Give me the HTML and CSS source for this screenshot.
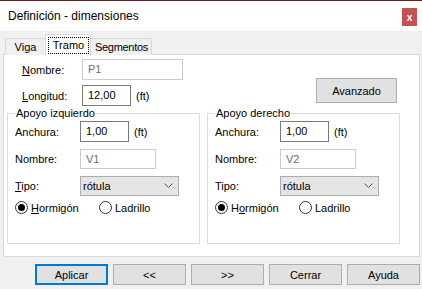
FILE: index.html
```html
<!DOCTYPE html>
<html lang="es">
<head>
    <meta charset="UTF-8">
    <title>Definición - dimensiones</title>
    <link rel="stylesheet" href="styles.css">
</head>
<body>
    <div class="window">
        <div class="titlebar">
            <span class="title">Definición - dimensiones</span>
            <span class="close">x</span>
        </div>

        <div class="client">
            <!-- tab strip -->
            <div class="tabs">
                <span class="tab">Viga</span>
                <span class="tab active"><span class="focus">Tramo</span></span>
                <span class="tab wide">Segmentos</span>
            </div>

            <div class="panel">
                <div class="top">
                    <div class="fields">
                        <div class="row">
                            <label class="lbl"><u>N</u>ombre:</label>
                            <span class="input disabled name-main">P1</span>
                        </div>
                        <div class="row">
                            <label class="lbl"><u>L</u>ongitud:</label>
                            <span class="input num">12,00</span>
                            <span class="unit">(ft)</span>
                        </div>
                    </div>
                    <button class="btn advanced">Avanzado</button>
                </div>

                <div class="groups">
                    <fieldset class="group">
                        <legend>Apoyo izquierdo</legend>
                        <div class="row">
                            <label class="glbl">Anchura:</label>
                            <span class="input num">1,00</span>
                            <span class="unit">(ft)</span>
                        </div>
                        <div class="row">
                            <label class="glbl">Nombre:</label>
                            <span class="input disabled name-sup">V1</span>
                        </div>
                        <div class="row">
                            <label class="glbl"><u>T</u>ipo:</label>
                            <span class="select">rótula
                                <svg class="chevron" width="9" height="5" viewBox="0 0 9 5"><path d="M0.5 0.5 L4.5 4.5 L8.5 0.5" fill="none" stroke="#555" stroke-width="1"/></svg>
                            </span>
                        </div>
                        <div class="radios">
                            <span class="radio"><span class="dot checked"></span><span><u>H</u>ormigón</span></span>
                            <span class="radio"><span class="dot"></span><span>Ladrillo</span></span>
                        </div>
                    </fieldset>

                    <fieldset class="group">
                        <legend>Apoyo derecho</legend>
                        <div class="row">
                            <label class="glbl">Anchura:</label>
                            <span class="input num">1,00</span>
                            <span class="unit">(ft)</span>
                        </div>
                        <div class="row">
                            <label class="glbl">Nombre:</label>
                            <span class="input disabled name-sup">V2</span>
                        </div>
                        <div class="row">
                            <label class="glbl">Tipo:</label>
                            <span class="select">rótula
                                <svg class="chevron" width="9" height="5" viewBox="0 0 9 5"><path d="M0.5 0.5 L4.5 4.5 L8.5 0.5" fill="none" stroke="#555" stroke-width="1"/></svg>
                            </span>
                        </div>
                        <div class="radios">
                            <span class="radio"><span class="dot checked"></span><span>H<u>o</u>rmigón</span></span>
                            <span class="radio"><span class="dot"></span><span>Ladrillo</span></span>
                        </div>
                    </fieldset>
                </div>
            </div>

            <div class="actions">
                <button class="btn default">Aplicar</button>
                <button class="btn">&lt;&lt;</button>
                <button class="btn">&gt;&gt;</button>
                <button class="btn">Cerrar</button>
                <button class="btn">Ayuda</button>
            </div>
        </div>
    </div>
</body>
</html>
```

FILE: styles.css
```css
* {
    box-sizing: border-box;
}
body {
    margin: 0;
    background: #f0f0f0;
    font-family: "Liberation Sans", Arial, sans-serif;
    font-size: 11px;
    color: #000;
}
.window {
    width: 422px;
    height: 289px;
    overflow: hidden;
}
.titlebar {
    height: 31px;
    border-top: 1px solid #6e1c1c;
    background: #fff;
    display: flex;
    align-items: center;
    padding-left: 8px;
}
.title {
    font-size: 12px;
    margin-top: -1px;
}
.close {
    margin-left: auto;
    margin-right: 5px;
    align-self: flex-start;
    margin-top: 7px;
    width: 15px;
    height: 18px;
    background: #c75050;
    color: #fff;
    font-weight: bold;
    font-size: 10px;
    display: flex;
    align-items: center;
    justify-content: center;
}
.client {
    height: 258px;
    background: #f0f0f0;
}

/* tabs */
.tabs {
    height: 24px;
    display: flex;
    align-items: flex-end;
    padding-left: 5px;
}
.tab {
    width: 41px;
    height: 17px;
    border: 1px solid #d9d9d9;
    border-bottom: none;
    background: #f0f0f0;
    text-align: center;
    line-height: 16px;
}
.tab.wide {
    width: 62px;
    letter-spacing: -0.3px;
    padding-left: 1px;
}
.tab.active {
    height: 22px;
    width: 46px;
    margin: 0 -1px -1px -1px;
    padding: 2px 1px 0 2px;
    background: #fff;
    position: relative;
    z-index: 1;
}
.tab.active .focus {
    display: block;
    border: 1px dotted #000;
    line-height: 15px;
}

.panel {
    height: 203px;
    margin: -1px 2px 0 3px;
    border: 1px solid #d9d9d9;
    background: #fff;
    padding-top: 4px;
}
.top {
    display: flex;
    align-items: flex-start;
}
.fields {
    display: flex;
    flex-direction: column;
    gap: 5px;
    padding-left: 18px;
}
.row {
    display: flex;
    align-items: center;
    height: 21px;
}
.lbl {
    width: 60px;
}
.glbl {
    width: 65px;
}
.input {
    height: 21px;
    border: 1px solid #7a7a7a;
    background: #fff;
    padding-left: 5px;
    line-height: 19px;
}
.input.disabled {
    border-color: #cccccc;
    color: #6d6d6d;
}
.input.num {
    width: 49px;
}
.name-main {
    width: 101px;
}
.name-sup {
    width: 76px;
    height: 20px;
}
.unit {
    margin-left: 5px;
}
.btn {
    font-family: inherit;
    font-size: 11px;
    color: #000;
    background: #e1e1e1;
    border: 1px solid #adadad;
    padding: 0;
}
.advanced {
    width: 81px;
    height: 25px;
    margin: 19px 0 0 133px;
}

/* groups */
.groups {
    display: grid;
    grid-template-columns: 193px 193px;
    gap: 7px;
    padding-left: 3px;
}
.group {
    margin: 0;
    height: 138px;
    border: 1px solid #dcdcdc;
    padding: 1px 7px 0 7px;
    display: flex;
    flex-direction: column;
    gap: 6px;
}
.group legend {
    padding: 0 1px;
    line-height: 14px;
}
.select {
    width: 99px;
    height: 20px;
    background: #e5e5e5;
    border: 1px solid #adadad;
    padding-left: 2px;
    display: flex;
    align-items: center;
    justify-content: space-between;
    padding-right: 5px;
}
.radios {
    display: flex;
    margin-top: -1px;
}
.radio {
    width: 84px;
    display: flex;
    align-items: center;
    gap: 3px;
}
.dot {
    width: 13px;
    height: 13px;
    border: 1px solid #333;
    border-radius: 50%;
    display: flex;
    align-items: center;
    justify-content: center;
}
.dot.checked::after {
    content: "";
    width: 7px;
    height: 7px;
    border-radius: 50%;
    background: #000;
}

/* bottom buttons */
.actions {
    display: flex;
    justify-content: flex-end;
    gap: 5px;
    padding-right: 2px;
    margin-top: 7px;
}
.actions .btn {
    width: 73px;
    height: 21px;
}
.actions .default {
    border: 2px solid #0078d7;
}
```
